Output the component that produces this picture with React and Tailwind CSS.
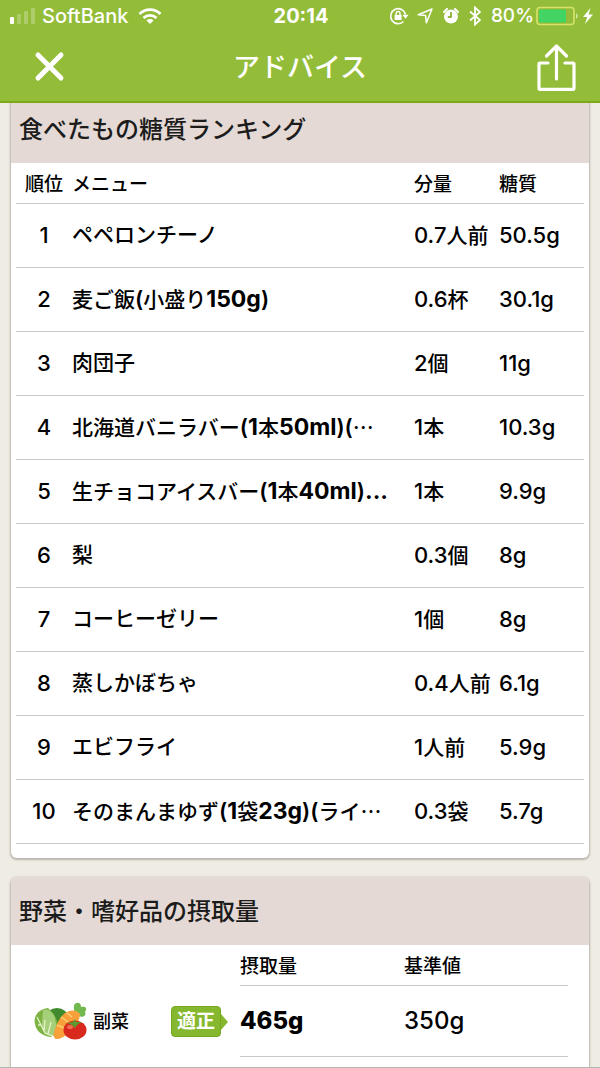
const ranking = [
  { menu: "ペペロンチーノ", amount: "0.7人前", carbs: "50.5g" },
  { menu: "麦ご飯(小盛り150g)", amount: "0.6杯", carbs: "30.1g" },
  { menu: "肉団子", amount: "2個", carbs: "11g" },
  { menu: "北海道バニラバー(1本50ml)(…", amount: "1本", carbs: "10.3g" },
  { menu: "生チョコアイスバー(1本40ml)...", amount: "1本", carbs: "9.9g" },
  { menu: "梨", amount: "0.3個", carbs: "8g" },
  { menu: "コーヒーゼリー", amount: "1個", carbs: "8g" },
  { menu: "蒸しかぼちゃ", amount: "0.4人前", carbs: "6.1g" },
  { menu: "エビフライ", amount: "1人前", carbs: "5.9g" },
  { menu: "そのまんまゆず(1袋23g)(ライ…", amount: "0.3袋", carbs: "5.7g" },
];

// Latin letters and digits are set a little larger than the Japanese
function MixedText({ text, latinClass }) {
  return text.split(/([0-9a-z.]+|[()]+|…)/).map((part, i) => {
    if (i % 2 === 0) return part;
    if (part === "…") {
      return (
        <span key={i} className="font-['Noto_Sans_CJK_JP']">
          {part}
        </span>
      );
    }
    return (
      <span key={i} className={/[()]/.test(part) ? "text-[22px] font-semibold" : latinClass}>
        {part}
      </span>
    );
  });
}

function StatusBar() {
  return (
    <div className="grid grid-cols-[1fr_auto_1fr] items-center h-8 pl-2 pr-1.5 text-[19px]">
      <div className="flex items-center">
        <svg className="w-7 h-4 mr-1" viewBox="0 0 28 16" fill="currentColor">
          <rect x="2" y="9" width="4" height="7" rx="1" />
          <rect x="9" y="6" width="4" height="10" rx="1" opacity="0.25" />
          <rect x="16" y="3" width="4" height="13" rx="1" opacity="0.25" />
          <rect x="23" y="0" width="4" height="16" rx="1" opacity="0.25" />
        </svg>
        <span className="ml-0.5 text-[20px]">SoftBank</span>
        <svg className="w-6 h-4 ml-2.5" viewBox="0 0 24 16" fill="none" stroke="currentColor" strokeWidth="2.8">
          <path d="M1.5 6 A15 15 0 0 1 22.5 6" />
          <path d="M5.5 10 A9.5 9.5 0 0 1 18.5 10" />
          <path d="M8.4 12.4 Q12 9.6 15.6 12.4 L12 16 Z" fill="currentColor" stroke="none" />
        </svg>
      </div>
      <span className="text-[20px] font-bold">20:14</span>
      <div className="flex items-center justify-end">
        {/* Rotation lock */}
        <svg className="w-5 h-5 mr-2" viewBox="0 0 20 20" fill="none" stroke="currentColor" strokeWidth="1.6">
          <path d="M14.5 15.5 A7.5 7.5 0 1 1 16.500 8.500" />
          <path d="M13.400 8.800 L19.600 8.800 L16.500 12.800 Z" fill="currentColor" stroke="none" />
          <rect x="5.600" y="9" width="7" height="5" fill="currentColor" stroke="none" />
          <path d="M7.200 9 V7.400 A1.900 1.900 0 0 1 11 7.400 V9" strokeWidth="1.4" />
        </svg>
        {/* Location */}
        <svg className="w-4 h-4 mr-2.5" viewBox="0 0 16 16" fill="none" stroke="currentColor" strokeWidth="1.5" strokeLinejoin="round">
          <path d="M15 1 L1.2 6.8 L8.6 7.4 L9.4 14.8 Z" />
        </svg>
        {/* Alarm */}
        <svg className="w-4 h-4 mr-2.5" viewBox="0 0 16 16">
          <circle cx="8" cy="8.6" r="7" fill="currentColor" />
          <path d="M1 4 L4 1 M15 4 L12 1" stroke="currentColor" strokeWidth="2" strokeLinecap="round" />
          <path d="M8 4 V9 H4.8" fill="none" stroke="#76a00f" strokeWidth="1.5" />
        </svg>
        {/* Bluetooth */}
        <svg className="w-3 h-5 mr-2.5" viewBox="0 0 12 20" fill="none" stroke="currentColor" strokeWidth="1.8">
          <path d="M1 5.5 L11 14 L6 18.5 V1.5 L11 6 L1 14.5" />
        </svg>
        <span>80%</span>
        <svg className="w-11 h-5 ml-0.5" viewBox="0 0 44 20">
          <rect x="1" y="1.5" width="37" height="17" rx="3" fill="none" stroke="#d6e36a" strokeWidth="1.6" />
          <rect x="3" y="3.5" width="27" height="13" rx="1" fill="#43d563" />
          <path d="M40 7 Q43.5 10 40 13 Z" fill="#d6e8a0" />
        </svg>
        <svg className="w-3 h-4 ml-0.5" viewBox="0 0 12 16" fill="currentColor">
          <path d="M8.5 0 L1 9 H5.2 L3 16 L11 6.6 H6.6 Z" />
        </svg>
      </div>
    </div>
  );
}

function Card({ title, children }) {
  return (
    <section className="rounded-md last:rounded-b-none bg-white overflow-hidden shadow-[0_1px_2px_1px_#b9b5ae]">
      <h2 className="h-[68px] pt-0.5 pl-2 flex items-center bg-[#e4d9d4] text-[24px] leading-none text-[#1c1c1c]">
        {title}
      </h2>
      {children}
    </section>
  );
}

function Vegetables() {
  return (
    <svg className="w-14 h-10 shrink-0" viewBox="0 0 56 40">
      <ellipse cx="24" cy="15" rx="11" ry="9" fill="#3f8a2c" />
      <path d="M15 6 C5 7 0 15 2 22 C3 29 9 34 18 35 C25 29 27 20 20 11 Z" fill="#7cb342" />
      <path d="M10 8 C17 5 25 13 23 33 C16 37 8 31 9 21 Z" fill="#a5cf78" />
      <path d="M4 15 L12 31 L20 34 M8 23 L5 23 M11 29 L12 18 M15 32 L18 20" fill="none" stroke="#e5f2c9" strokeWidth="1.3" />
      <path d="M43 14 C40 7 40 1 44 1 C47 0 48 3 48 5 C52 4 55 6 52 10 C54 14 49 16 46 14 Z" fill="#71b84e" />
      <path d="M47 12 C41 5 31 9 26 18 C22 26 18 35 23 37 C31 38 47 23 47 12 Z" fill="#f8a13b" />
      <path d="M28 15 L35 20 M24 23 L31 26 M34 11 L39 15" stroke="#ffcf73" strokeWidth="1.5" />
      <ellipse cx="42" cy="28" rx="11.5" ry="9.5" fill="#d9291c" />
      <ellipse cx="37" cy="25" rx="3" ry="2" fill="#f06a4f" />
      <path d="M42 17 L43 20 L49 20 L44 23 L42 26 L39 23 L34 21 L40 20 Z" fill="#5a9a2f" />
    </svg>
  );
}

export default function App() {
  return (
    <div className="min-h-screen bg-[#efece4] border-b border-[#b5b5b5] font-['Inter','Noto_Sans_CJK_JP',sans-serif] font-medium text-black">
      <header className="relative h-[103px] bg-[#93bc38] border-b-2 border-[#7caa14] text-white">
        <StatusBar />
        <div className="grid grid-cols-[1fr_auto_1fr] items-center h-[70px] px-6">
          <button type="button" aria-label="閉じる" className="justify-self-start pl-2.5">
            <svg className="w-8 h-8" viewBox="0 0 32 32" stroke="currentColor" strokeWidth="5" strokeLinecap="round">
              <path d="M4 4 L27 27 M27 4 L4 27" />
            </svg>
          </button>
          <h1 className="text-[27px] leading-none">アドバイス</h1>
          <button type="button" aria-label="共有" className="justify-self-end">
            <svg className="w-10 h-12" viewBox="0 0 40 48" fill="none" stroke="currentColor" strokeWidth="3.2" strokeLinecap="round" strokeLinejoin="round">
              <path d="M12 20 H4 Q3 20 3 21 V45 Q3 46.400 4 46.400 H37 Q38 46.400 38 45 V21 Q38 20 37 20 H29" />
              <path d="M20.500 36 V3 M10.500 13 L20.500 3 L30.500 13" />
            </svg>
          </button>
        </div>
      </header>

      <main className="-mt-2 flex flex-col gap-[19px] px-[11px]">
        <Card title="食べたもの糖質ランキング">
          <div className="px-[5px] pb-3.5">
            <table className="w-full table-fixed border-collapse text-left whitespace-nowrap">
              <colgroup>
                <col className="w-14" />
                <col />
                <col className="w-[85px]" />
                <col className="w-[85px]" />
              </colgroup>
              <thead>
                <tr className="h-10 border-b border-[#c8c8c8] text-[19px]">
                  <th className="pt-1 font-medium text-center">順位</th>
                  <th className="pt-1 font-medium">メニュー</th>
                  <th className="pt-1 font-medium">分量</th>
                  <th className="pt-1 font-medium">糖質</th>
                </tr>
              </thead>
              <tbody className="text-[21px]">
                {ranking.map((item, i) => (
                  <tr key={item.menu} className="h-16 border-b border-[#c8c8c8]">
                    <td className="text-center text-[22px]">{i + 1}</td>
                    <td>
                      <MixedText text={item.menu} latinClass="text-[23px] font-bold" />
                    </td>
                    <td>
                      <MixedText text={item.amount} latinClass="text-[22px]" />
                    </td>
                    <td className="text-[22px]">{item.carbs}</td>
                  </tr>
                ))}
              </tbody>
            </table>
          </div>
        </Card>

        <Card title="野菜・嗜好品の摂取量">
          <div className="flex pl-[22px] pr-[21px] pb-2.5">
            <div className="flex items-center w-[207px] shrink-0 pt-[42px]">
              <Vegetables />
              <span className="ml-1 text-[18px]">副菜</span>
              <div className="ml-auto mr-3 flex items-center">
                <span className="flex items-center justify-center w-[50px] h-[31px] rounded-sm bg-[#86b82f] border border-[#75a81c] text-[19px] font-bold text-white">
                  適正
                </span>
                <svg className="w-[7px] h-4" viewBox="0 0 7 16" fill="#86b82f">
                  <path d="M0 0 L7 8 L0 16 Z" />
                </svg>
              </div>
            </div>
            <table className="flex-1 table-fixed border-collapse text-left">
              <colgroup>
                <col className="w-1/2" />
                <col className="w-1/2" />
              </colgroup>
              <thead>
                <tr className="h-[41px] border-b border-[#c8c8c8] text-[19px]">
                  <th className="pt-1 font-medium">摂取量</th>
                  <th className="pt-1 font-medium">基準値</th>
                </tr>
              </thead>
              <tbody>
                <tr className="h-[71px] border-b border-[#c8c8c8] text-[24px]">
                  <td className="font-extrabold">465g</td>
                  <td>350g</td>
                </tr>
              </tbody>
            </table>
          </div>
        </Card>
      </main>
    </div>
  );
}
